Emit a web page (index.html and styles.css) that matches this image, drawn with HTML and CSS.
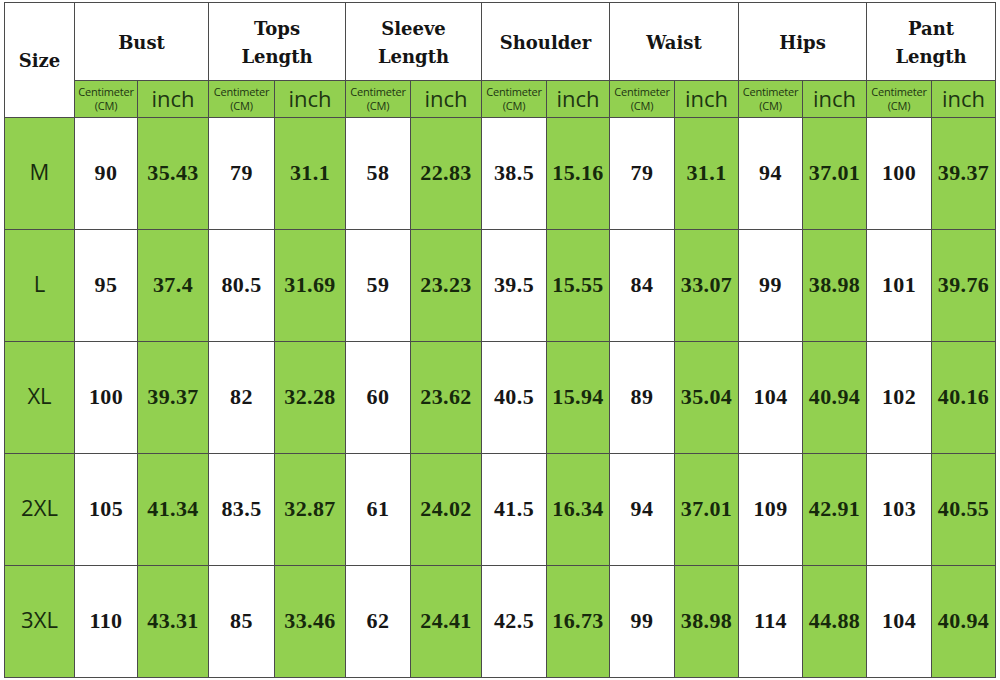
FILE: index.html
```html
<!DOCTYPE html>
<html lang="en">
<head>
<meta charset="utf-8">
<title>Size Chart</title>
<link rel="stylesheet" href="styles.css">
</head>
<body>
<div class="chart">
  <div class="cell head size-head">Size</div>
  <div class="cell head group">Bust</div>
  <div class="cell head group">Tops<br>Length</div>
  <div class="cell head group">Sleeve<br>Length</div>
  <div class="cell head group">Shoulder</div>
  <div class="cell head group">Waist</div>
  <div class="cell head group">Hips</div>
  <div class="cell head group">Pant<br>Length</div>

  <div class="cell sub cm">Centimeter<br>(CM)</div><div class="cell sub inch">inch</div>
  <div class="cell sub cm">Centimeter<br>(CM)</div><div class="cell sub inch">inch</div>
  <div class="cell sub cm">Centimeter<br>(CM)</div><div class="cell sub inch">inch</div>
  <div class="cell sub cm">Centimeter<br>(CM)</div><div class="cell sub inch">inch</div>
  <div class="cell sub cm">Centimeter<br>(CM)</div><div class="cell sub inch">inch</div>
  <div class="cell sub cm">Centimeter<br>(CM)</div><div class="cell sub inch">inch</div>
  <div class="cell sub cm">Centimeter<br>(CM)</div><div class="cell sub inch">inch</div>

  <div class="cell size">M</div>
  <div class="cell val">90</div><div class="cell val g">35.43</div>
  <div class="cell val">79</div><div class="cell val g">31.1</div>
  <div class="cell val">58</div><div class="cell val g">22.83</div>
  <div class="cell val">38.5</div><div class="cell val g">15.16</div>
  <div class="cell val">79</div><div class="cell val g">31.1</div>
  <div class="cell val">94</div><div class="cell val g">37.01</div>
  <div class="cell val">100</div><div class="cell val g">39.37</div>

  <div class="cell size">L</div>
  <div class="cell val">95</div><div class="cell val g">37.4</div>
  <div class="cell val">80.5</div><div class="cell val g">31.69</div>
  <div class="cell val">59</div><div class="cell val g">23.23</div>
  <div class="cell val">39.5</div><div class="cell val g">15.55</div>
  <div class="cell val">84</div><div class="cell val g">33.07</div>
  <div class="cell val">99</div><div class="cell val g">38.98</div>
  <div class="cell val">101</div><div class="cell val g">39.76</div>

  <div class="cell size">XL</div>
  <div class="cell val">100</div><div class="cell val g">39.37</div>
  <div class="cell val">82</div><div class="cell val g">32.28</div>
  <div class="cell val">60</div><div class="cell val g">23.62</div>
  <div class="cell val">40.5</div><div class="cell val g">15.94</div>
  <div class="cell val">89</div><div class="cell val g">35.04</div>
  <div class="cell val">104</div><div class="cell val g">40.94</div>
  <div class="cell val">102</div><div class="cell val g">40.16</div>

  <div class="cell size">2XL</div>
  <div class="cell val">105</div><div class="cell val g">41.34</div>
  <div class="cell val">83.5</div><div class="cell val g">32.87</div>
  <div class="cell val">61</div><div class="cell val g">24.02</div>
  <div class="cell val">41.5</div><div class="cell val g">16.34</div>
  <div class="cell val">94</div><div class="cell val g">37.01</div>
  <div class="cell val">109</div><div class="cell val g">42.91</div>
  <div class="cell val">103</div><div class="cell val g">40.55</div>

  <div class="cell size">3XL</div>
  <div class="cell val">110</div><div class="cell val g">43.31</div>
  <div class="cell val">85</div><div class="cell val g">33.46</div>
  <div class="cell val">62</div><div class="cell val g">24.41</div>
  <div class="cell val">42.5</div><div class="cell val g">16.73</div>
  <div class="cell val">99</div><div class="cell val g">38.98</div>
  <div class="cell val">114</div><div class="cell val g">44.88</div>
  <div class="cell val">104</div><div class="cell val g">40.94</div>
</div>
</body>
</html>
```

FILE: styles.css
```css
html, body {
  margin: 0;
  padding: 0;
  background: #ffffff;
}

body {
  padding: 2px 0 0 4px;
}

.chart {
  display: grid;
  width: 992px;
  box-sizing: border-box;
  grid-template-columns: 69px 62px 70px 65px 70px 64px 70px 64px 62px 64px 63px 63px 63px 64px 63px;
  grid-template-rows: 77px 36px 111px 111px 111px 111px 111px;
  gap: 1px;
  padding: 1px;
  background: #4b4b4b;
}

.cell {
  display: flex;
  align-items: center;
  justify-content: center;
  text-align: center;
  background: #ffffff;
}

.head {
  font-family: "DejaVu Serif", "Liberation Serif", serif;
  font-weight: bold;
  font-size: 18px;
  line-height: 28px;
  color: #141414;
}

.size-head {
  grid-row: span 2;
  padding-top: 2px;
}

.group {
  grid-column: span 2;
  padding-top: 2px;
}

.sub {
  background: #92d050;
  font-family: "Open Sans", "Noto Sans", sans-serif;
  color: #1d3612;
}

.sub.cm {
  font-size: 11px;
  line-height: 14px;
  letter-spacing: -0.2px;
}

.sub.inch {
  font-size: 22px;
  line-height: 26px;
  padding-bottom: 3px;
}

.size {
  background: #92d050;
  font-family: "Open Sans", "Noto Sans", sans-serif;
  font-size: 22px;
  color: #172c0e;
  padding-bottom: 6px;
}

.val {
  font-family: "Liberation Serif", "Times New Roman", serif;
  font-weight: bold;
  font-size: 22px;
  letter-spacing: 0.4px;
  color: #161616;
  padding-bottom: 1px;
}

.val.g {
  background: #92d050;
  color: #16290c;
}
```
